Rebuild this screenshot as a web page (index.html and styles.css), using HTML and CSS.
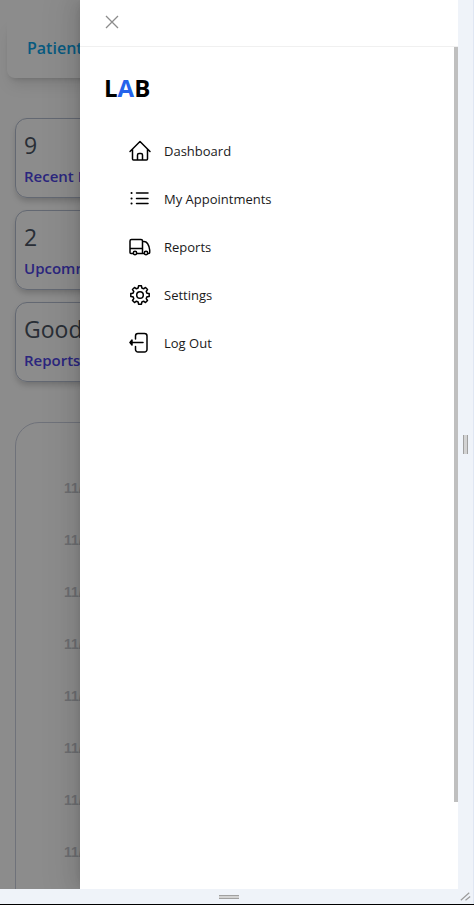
FILE: index.html
```html
<!DOCTYPE html>
<html lang="en">
<head>
<meta charset="utf-8">
<meta name="viewport" content="width=device-width, initial-scale=1">
<title>Lab dashboard</title>
<link rel="stylesheet" href="styles.css">
</head>
<body>
<div class="frame">
  <div class="screen">
    <main class="page">
      <header class="banner"><h1>Patient</h1></header>
      <section class="stats">
        <article class="stat"><p class="value">9</p><h2>Recent Reports</h2></article>
        <article class="stat"><p class="value">2</p><h2>Upcomming</h2></article>
        <article class="stat"><p class="value">Good</p><h2>Reports</h2></article>
      </section>
      <section class="chart">
        <ul>
          <li>11/</li><li>11/</li><li>11/</li><li>11/</li>
          <li>11/</li><li>11/</li><li>11/</li><li>11/</li>
        </ul>
      </section>
    </main>
    <div class="mask"></div>
    <aside class="drawer">
      <div class="drawer-head">
        <button class="close" type="button" aria-label="Close">
          <svg viewBox="0 0 14 14"><path d="M1 1l12 12M13 1l-12 12"/></svg>
        </button>
      </div>
      <div class="drawer-body">
        <div class="drawer-content">
          <p class="logo">L<span>A</span>B</p>
          <nav class="menu">
            <a href="#dashboard"><svg viewBox="0 0 24 24"><path d="M2 12.500L12 2.500l10 10M4.500 10.500v9.500a1 1 0 0 0 1 1h13a1 1 0 0 0 1-1v-9.500M9.500 20.500v-4.500a1.500 1.500 0 0 1 1.500-1.500h2a1.500 1.500 0 0 1 1.500 1.500V20.500"/></svg>Dashboard</a>
            <a href="#appointments"><svg viewBox="0 0 24 24"><path d="M8.500 6h11.500M8.500 11.500h11.500M8.500 16.500h11.500"/><path class="dots" d="M3.500 6h.1M3.500 11.500h.1M3.500 16.500h.1"/></svg>My Appointments</a>
            <a href="#reports"><svg viewBox="0 0 24 24"><path d="M5 18.500H3a1 1 0 0 1-1-1V6a1.500 1.500 0 0 1 1.500-1.500h9.500A1.500 1.500 0 0 1 14.500 6v12.500M2 13.500h12.500M9 18.500h7M14.500 6.500h1.500c3.500 0 5 4 5.700 8.500v2.500a1 1 0 0 1-1 1H20"/><circle cx="7" cy="18" r="1.700"/><circle cx="18" cy="18" r="1.700"/></svg>Reports</a>
            <a href="#settings"><svg viewBox="-12 -12 24 24"><path d="M-1.450-9.190H1.450L1.860-6.960 3.600-6.240 5.470-7.520 7.520-5.470 6.240-3.600 6.960-1.860 9.190-1.450V1.450L6.960 1.860 6.240 3.600 7.520 5.470 5.470 7.520 3.600 6.240 1.860 6.960 1.450 9.190H-1.450L-1.860 6.960-3.600 6.240-5.470 7.520-7.520 5.470-6.240 3.600-6.960 1.860-9.190 1.450V-1.450L-6.960-1.860-6.240-3.600-7.520-5.470-5.470-7.520-3.600-6.240-1.860-6.960Z"/><circle r="3.300"/></svg>Settings</a>
            <a href="#logout"><svg viewBox="0 0 24 24"><path d="M7.500 8V5a2.500 2.500 0 0 1 2.500-2.500h6.500A2.500 2.500 0 0 1 19 5v13.500a2.500 2.500 0 0 1-2.500 2.500H10a2.500 2.500 0 0 1-2.500-2.500V15.500M2.500 11.500h12.500"/><path class="solid" d="M2 11.500l2-2.500v5z"/></svg>Log Out</a>
          </nav>
        </div>
        <div class="track"><div class="thumb"></div></div>
      </div>
    </aside>
  </div>
  <div class="edge edge-right"><span class="grip grip-v"></span></div>
  <div class="edge edge-bottom"><span class="grip grip-h"></span></div>
  <div class="edge corner"><svg viewBox="0 0 16 16"><path d="M3 12l9-8M8 12l5-4"/></svg></div>
</div>
</body>
</html>
```
FILE: styles.css
```css
* { box-sizing: border-box; }
body, h1, h2, p, ul { margin: 0; padding: 0; }
body { font-family: "Open Sans", "Noto Sans", sans-serif; color: #000; }

.frame {
  display: grid;
  grid-template-columns: 1fr 16px;
  grid-template-rows: 1fr 15px;
  height: 100vh;
  border-bottom: 1px solid #000;
}
.screen { position: relative; overflow: hidden; min-height: 0; }

.page { height: 100%; overflow: hidden; padding: 18px 8px 0 7px; background: #fff; }
.banner {
  display: flex;
  align-items: center;
  height: 60px;
  padding: 0 20px;
  border-radius: 8px;
  box-shadow: 0 10px 15px -3px rgba(0, 0, 0, .1), 0 4px 6px -4px rgba(0, 0, 0, .2);
}
.banner h1 { font-size: 16px; font-weight: 600; color: #0ea5e9; }
.stats { display: grid; gap: 12px; margin: 40px 8px; }
.stat {
  height: 80px;
  padding: 8px;
  border: 1px solid #b4bdcf;
  border-radius: 12px;
  box-shadow: 0 4px 6px -1px rgba(0, 0, 0, .2);
  white-space: nowrap;
}
.value { font-size: 23px; line-height: 36px; color: #4b5563; }
.stat h2 { font-size: 15px; line-height: 26px; font-weight: 600; color: #4f46e5; }
.chart {
  height: 520px;
  margin: 0 8px;
  padding: 39px 48px;
  border: 1px solid #cbd0df;
  border-radius: 24px;
}
.chart ul { list-style: none; }
.chart li {
  font: bold 14px/52px "Liberation Sans", Arial, sans-serif;
  color: #c6c9ce;
}

.mask { position: absolute; inset: 0; background: rgba(0, 0, 0, .45); }
.drawer {
  position: absolute;
  inset: 0 0 0 auto;
  display: flex;
  flex-direction: column;
  width: 378px;
  max-width: 100%;
  background: #fff;
  box-shadow: -6px 0 16px rgba(0, 0, 0, .08), -3px 0 6px -4px rgba(0, 0, 0, .12), -9px 0 28px 8px rgba(0, 0, 0, .05);
}
.drawer-head { padding: 10px 20px 12px; border-bottom: 1px solid #f0f0f0; }
.close { display: flex; padding: 5px; border: 0; background: none; }
.close svg { width: 14px; height: 14px; fill: none; stroke: #8c8c8c; stroke-width: 1.3; }
.drawer-body { display: flex; flex: 1; min-height: 0; }
.drawer-content { flex: 1; padding: 24px; }
.logo { font-size: 24px; line-height: 34px; font-weight: 700; }
.logo span { color: #2563eb; }
.menu { display: grid; padding: 22px 24px; }
.menu a {
  display: flex;
  align-items: center;
  gap: 12px;
  height: 48px;
  font-size: 13px;
  color: #1a1a1a;
  text-decoration: none;
}
.menu svg {
  width: 24px;
  height: 24px;
  fill: none;
  stroke: #000;
  stroke-width: 1.5;
  stroke-linecap: round;
  stroke-linejoin: round;
}
.menu .solid { fill: #000; }
.menu .dots { stroke-width: 2; }
.track { width: 4px; }
.thumb { height: 89.7%; background: #bfbfbf; }

.edge { display: flex; align-items: center; justify-content: center; background: #eff3f9; }
.edge-right, .corner { border-right: 1px solid #dfe6f3; }
.grip { background: #d3d3d3; }
.grip-v { width: 5px; height: 19px; border: solid #a0a0a0; border-width: 0 1px; }
.grip-h { width: 20px; height: 4px; border: solid #a0a0a0; border-width: 1px 0; }
.corner svg { width: 15px; height: 15px; fill: none; stroke: #9c9c9c; stroke-width: 1.3; }
```
